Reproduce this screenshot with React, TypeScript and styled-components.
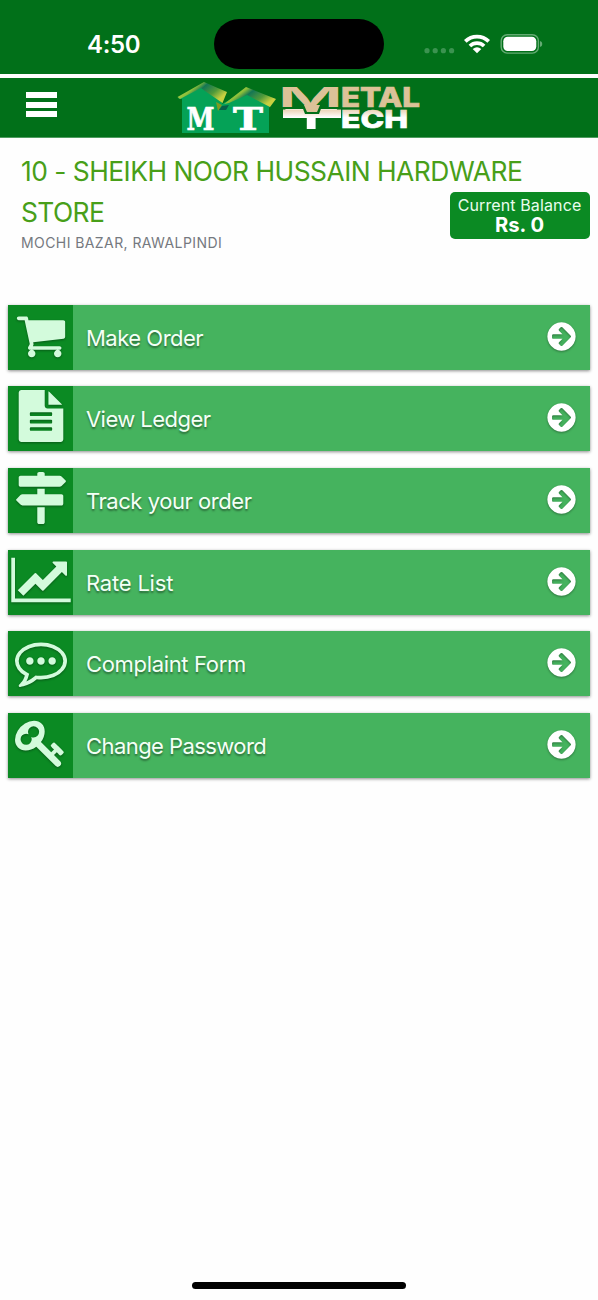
import React from "react";
import styled, { createGlobalStyle } from "styled-components";

const Global = createGlobalStyle`
  * { box-sizing: border-box; }
  body { margin: 0; background: #fff; font-family: Inter, "Liberation Sans", sans-serif; }
`;

const Screen = styled.div`
  width: 598px;
  height: 1300px;
  display: flex;
  flex-direction: column;
  background: #fefefe;
  overflow: hidden;
`;

const StatusBar = styled.div`
  height: 73.5px;
  flex: none;
  display: grid;
  grid-template-columns: 214px 170px 1fr;
  padding-top: 19px;
  background: #017019;
`;

const Clock = styled.div`
  padding-left: 87px;
  font-size: 24px;
  line-height: 51px;
  font-weight: 600;
  letter-spacing: -0.3px;
  color: #fff;
`;

const Island = styled.div`
  height: 50px;
  border-radius: 25px;
  background: #000;
`;

const StatusIcons = styled.div`
  height: 50px;
  padding-left: 39px;
`;

const Header = styled.header`
  height: 59.5px;
  flex: none;
  margin-top: 4.5px;
  display: flex;
  background: #017019;
  border-bottom: 1px solid #4f9c60;
`;

const MenuButton = styled.button`
  width: 31px;
  height: 25px;
  margin: 14px 0 0 26.4px;
  padding: 0;
  border: 0;
  background: none;
  display: flex;
  flex-direction: column;
  justify-content: space-between;
`;

const MenuLine = styled.span`
  height: 6px;
  background: #fff;
`;

const Logo = styled.svg`
  margin-left: 112.6px;
`;

const Account = styled.section`
  height: 167.4px;
  flex: none;
  display: flex;
  flex-direction: column;
  padding: 13.5px 8.5px 0 21px;
`;

const StoreName = styled.h1<{ $tracking: number }>`
  margin: 0;
  font-size: 26.4px;
  line-height: 41px;
  font-weight: 400;
  letter-spacing: ${(p) => p.$tracking}px;
  white-space: nowrap;
  color: #489f19;
`;

const SecondLine = styled.div`
  display: flex;
  justify-content: space-between;
  align-items: flex-start;
  height: 60px;
`;

const Address = styled.div`
  font-size: 14px;
  line-height: 20px;
  letter-spacing: 0.42px;
  color: #75797f;
`;

const Balance = styled.div`
  width: 140px;
  height: 47px;
  border-radius: 5px;
  background: #0b8a23;
  color: #fff;
  text-align: center;
  padding-top: 3px;
  margin-top: -0.5px;
`;

const BalanceLabel = styled.div`
  font-size: 16px;
  line-height: 20px;
  letter-spacing: 0.12px;
  white-space: nowrap;
  color: #e9fdee;
`;

const BalanceValue = styled.div`
  font-size: 20.2px;
  line-height: 19px;
  font-weight: 700;
`;

const Menu = styled.nav`
  display: flex;
  flex-direction: column;
  gap: 16.6px;
  padding: 0 8.4px;
`;

const Row = styled.a`
  height: 65px;
  display: flex;
  align-items: center;
  background: #45b35e;
  box-shadow: 0 1px 3px rgba(0, 0, 0, 0.45);
`;

const IconCell = styled.span`
  width: 65px;
  height: 65px;
  padding: 4px 0 0 6.6px;
  background: #0b8a23;
`;

const Glyph = styled.svg`
  display: block;
  overflow: visible;
  filter: drop-shadow(0 1.5px 1px rgba(0, 0, 0, 0.35));
`;

const Label = styled.span<{ $spacing: number }>`
  flex: 1;
  padding: 1px 0 0 12.6px;
  font-size: 22px;
  letter-spacing: ${(p) => p.$spacing}px;
  color: #f4fff6;
  text-shadow: 0 2px 2px rgba(0, 0, 0, 0.4);
`;

const ArrowCell = styled.span`
  margin: -2px 11.2px 0 0;
`;

const HomeIndicator = styled.div`
  width: 214px;
  height: 7px;
  border-radius: 4px;
  background: #000;
  margin: auto auto 11px 192px;
`;

const icons = {
  cart: "M704 1536q0 52-38 90t-90 38-90-38-38-90 38-90 90-38 90 38 38 90zm896 0q0 52-38 90t-90 38-90-38-38-90 38-90 90-38 90 38 38 90zm128-1088v512q0 24-16.5 42.5t-40.5 21.5l-1044 122q13 60 13 70 0 16-24 64h920q26 0 45 19t19 45-19 45-45 19h-1024q-26 0-45-19t-19-45q0-11 8-31.5t16-36 21.5-40 15.5-29.5l-177-823h-204q-26 0-45-19t-19-45 19-45 45-19h256q16 0 28.5 6.5t19.5 15.5 13 24.5 8 26 5.5 29.5 4.5 26h1201q26 0 45 19t19 45z",
  file: "M1596 476q14 14 28 36h-472v-472q22 14 36 28zm-476 164h544v1056q0 40-28 68t-68 28h-1344q-40 0-68-28t-28-68v-1600q0-40 28-68t68-28h800v544q0 40 28 68t68 28zm160 736v-64q0-14-9-23t-23-9h-704q-14 0-23 9t-9 23v64q0 14 9 23t23 9h704q14 0 23-9t9-23zm0-256v-64q0-14-9-23t-23-9h-704q-14 0-23 9t-9 23v64q0 14 9 23t23 9h704q14 0 23-9t9-23zm0-256v-64q0-14-9-23t-23-9h-704q-14 0-23 9t-9 23v64q0 14 9 23t23 9h704q14 0 23-9t9-23z",
  signs: "M1745 297q10 10 10 23t-10 23l-141 141q-28 28-68 28h-1344q-26 0-45-19t-19-45v-256q0-26 19-45t45-19h576v-64q0-26 19-45t45-19h128q26 0 45 19t19 45v64h512q40 0 68 28zm-977 919h256v512q0 26-19 45t-45 19h-128q-26 0-45-19t-19-45v-512zm832-448q26 0 45 19t19 45v256q0 26-19 45t-45 19h-1344q-40 0-68-28l-141-141q-10-10-10-23t10-23l141-141q28-28 68-28h512v-192h256v192h576z",
  chart: "M1920 1536v128h-2048v-1536h128v1408h1920zm-128-1248v435q0 21-19.5 29.5t-35.5-7.5l-121-121-633 633q-10 10-23 10t-23-10l-233-233-416 416-192-192 585-585q10-10 23-10t23 10l233 233 464-464-121-121q-16-16-7.5-35.5t29.5-19.5h435q14 0 23 9t9 23z",
  comment: "M640 896q0 53-37.5 90.5t-90.5 37.5-90.5-37.5-37.5-90.5 37.5-90.5 90.5-37.5 90.5 37.5 37.5 90.5zm384 0q0 53-37.5 90.5t-90.5 37.5-90.5-37.5-37.5-90.5 37.5-90.5 90.5-37.5 90.5 37.5 37.5 90.5zm384 0q0 53-37.5 90.5t-90.5 37.5-90.5-37.5-37.5-90.5 37.5-90.5 90.5-37.5 90.5 37.5 37.5 90.5zm-512-512q-204 0-381.5 69.5t-282 187.5-104.5 255q0 112 71.5 213.5t201.5 175.5l87 50-27 96q-24 91-70 172 152-63 275-171l43-38 57 6q69 8 130 8 204 0 381.5-69.5t282-187.5 104.5-255-104.5-255-282-187.5-381.5-69.5zm896 512q0 174-120 321.5t-326 233-450 85.5q-70 0-145-8-198 175-460 242-49 14-114 22h-5q-15 0-27-10.5t-16-27.5v-1q-3-4-.5-12t2-10 4.5-9.5l6-9 7-8.5 8-9q7-8 31-34.5t34.5-38 31-39.5 32.5-51 27-59 26-76q-157-89-247.5-220t-90.5-281q0-174 120-321.5t326-233 450-85.5 450 85.5 326 233 120 321.5z",
  key: "M832 512q0-80-56-136t-136-56-136 56-56 136q0 42 19 83-41-19-83-19-80 0-136 56t-56 136 56 136 136 56 136-56 56-136q0-42-19-83 41 19 83 19 80 0 136-56t56-136zm851 704q0 17-49 66t-66 49q-9 0-28.5-16t-36.5-33-38.5-40-24.5-26l-96 96 220 220q28 28 28 68 0 42-39 81t-81 39q-40 0-68-28l-671-671q-176 131-365 131-163 0-265.5-102.5t-102.5-265.5q0-160 95-313t248-248 313-95q163 0 265.5 102.5t102.5 265.5q0 189-131 365l355 355 96-96q-3-3-26-24.5t-40-38.5-33-36.5-16-28.5q0-17 49-66t66-49q13 0 23 10 6 6 46 44.5t82 79.5 86.5 86 73 78 28.5 41z",
  arrow: "M1413 896q0-27-18-45l-91-91-362-362q-18-18-45-18t-45 18l-91 91q-18 18-18 45t18 45l189 189h-502q-26 0-45 19t-19 45v128q0 26 19 45t45 19h502l-189 189q-19 19-19 45t19 45l91 91q18 18 45 18t45-18l362-362 91-91q18-18 18-45zm251 0q0 209-103 385.5t-279.5 279.5-385.5 103-385.5-103-279.5-279.5-103-385.5 103-385.5 279.5-279.5 385.5-103 385.5 103 279.5 279.5 103 385.5z",
};

const items: { label: string; icon: keyof typeof icons; spacing: number }[] = [
  { label: "Make Order", icon: "cart", spacing: -0.5 },
  { label: "View Ledger", icon: "file", spacing: -0.55 },
  { label: "Track your order", icon: "signs", spacing: -0.45 },
  { label: "Rate List", icon: "chart", spacing: -0.2 },
  { label: "Complaint Form", icon: "comment", spacing: -0.33 },
  { label: "Change Password", icon: "key", spacing: -0.57 },
];

function Icon({ name, size, color }: { name: keyof typeof icons; size: number; color: string }) {
  return (
    <Glyph width={size} height={size} viewBox="0 0 1792 1792">
      <path d={icons[name]} fill={color} />
    </Glyph>
  );
}

function BrandLogo() {
  return (
    <Logo width="252" height="59" viewBox="170 78 252 59">
      <defs>
        <linearGradient id="roof" x1="0" y1="0" x2="1" y2="0.5">
          <stop offset="0" stopColor="#dfe65a" />
          <stop offset="0.38" stopColor="#8cbf3a" />
          <stop offset="0.52" stopColor="#147654" />
          <stop offset="0.78" stopColor="#4f9a3a" />
          <stop offset="1" stopColor="#c8d040" />
        </linearGradient>
        <linearGradient id="cream" gradientUnits="userSpaceOnUse" x1="0" y1="108" x2="0" y2="120">
          <stop offset="0" stopColor="#e6caa6" />
          <stop offset="0.8" stopColor="#fff" />
        </linearGradient>
      </defs>
      <path d="M178 99L203 83L225 94L222 104L247 90L275 99L269 108V133H182V99Z" fill="#05a257" />
      <path d="M177.5 97L204 82L227 92L222.5 103L205 91L201 88L180 99Z" fill="url(#roof)" />
      <path d="M224 104L246 87L276 99L270 107L247 95L229 103Z" fill="url(#roof)" />
      <path d="M216 102L222 105L218 111Z" fill="#7e9a20" />
      <path d="M222 106L229 105L226 110H219Z" fill="#075f48" />
      <g fontFamily="DejaVu Serif, serif" fontWeight="700" fill="#fff" stroke="#fff" strokeWidth="0.7">
        <text x="186.500" y="129.5" fontSize="32.500" textLength="28" lengthAdjust="spacingAndGlyphs">M</text>
        <text x="233" y="129.5" fontSize="32.500" textLength="30" lengthAdjust="spacingAndGlyphs">T</text>
      </g>
      <g fontFamily="Inter, sans-serif">
        <text transform="translate(281 129) scale(3.4 1)" fontSize="27.5" fontWeight="400" fill="#fff">T</text>
        <rect x="283" y="109.5" width="58" height="8.5" fill="url(#cream)" />
        <path d="M302 106H322L319 114H305Z" fill="#017019" />
        <text transform="translate(277.500 106.5) scale(2.64 1)" fontSize="27" fontWeight="600" fill="#dcc298">M</text>
        <path d="M304 105H320L317 112H307Z" fill="#dcc298" />
        <g fontWeight="800">
          <text x="341" y="106.5" fontSize="27" fill="#dcc298" stroke="#dcc298" strokeWidth="0.7" textLength="79" lengthAdjust="spacingAndGlyphs">ETAL</text>
          <text x="341" y="128.3" fontSize="24.500" fill="url(#cream)" stroke="url(#cream)" strokeWidth="0.7" textLength="67" lengthAdjust="spacingAndGlyphs">ECH</text>
        </g>
      </g>
    </Logo>
  );
}

export default function App() {
  return (
    <Screen>
      <Global />
      <StatusBar>
        <Clock>4:50</Clock>
        <Island />
        <StatusIcons>
          <svg width="122" height="50" viewBox="423 19 122 50">
            <g fill="#3b9350">
              <circle cx="427" cy="50.7" r="2.6" />
              <circle cx="435.2" cy="50.7" r="2.6" />
              <circle cx="443.4" cy="50.7" r="2.6" />
              <circle cx="451.6" cy="50.7" r="2.6" />
            </g>
            <g fill="none" stroke="#fff" strokeWidth="3.7">
              <path d="M465.3 41.4A16.8 16.8 0 0 1 488.7 41.4" />
              <path d="M469.9 46A10.2 10.2 0 0 1 484.1 46" />
            </g>
            <path d="M472.7 49Q477 45.6 481.3 49L477 53.3Z" fill="#fff" />
            <rect x="501.2" y="34.7" width="37.2" height="18.4" rx="6" fill="none" stroke="#64ab73" strokeWidth="1.4" />
            <rect x="503.3" y="36.8" width="33" height="14.2" rx="4.4" fill="#fff" />
            <path d="M540 41V47Q542.3 46.3 542.3 44Q542.3 41.7 540 41Z" fill="#64ab73" />
          </svg>
        </StatusIcons>
      </StatusBar>
      <Header>
        <MenuButton aria-label="Menu">
          <MenuLine />
          <MenuLine />
          <MenuLine />
        </MenuButton>
        <BrandLogo />
      </Header>
      <Account>
        <StoreName $tracking={-0.52}>10 - SHEIKH NOOR HUSSAIN HARDWARE</StoreName>
        <SecondLine>
          <div>
            <StoreName as="div" $tracking={-0.6}>STORE</StoreName>
            <Address>MOCHI BAZAR, RAWALPINDI</Address>
          </div>
          <Balance>
            <BalanceLabel>Current Balance</BalanceLabel>
            <BalanceValue>Rs. 0</BalanceValue>
          </Balance>
        </SecondLine>
      </Account>
      <Menu>
        {items.map((item) => (
          <Row key={item.label}>
            <IconCell>
              <Icon name={item.icon} size={52} color="#d3fbdc" />
            </IconCell>
            <Label $spacing={item.spacing}>{item.label}</Label>
            <ArrowCell>
              <Icon name="arrow" size={33} color="#fff" />
            </ArrowCell>
          </Row>
        ))}
      </Menu>
      <HomeIndicator />
    </Screen>
  );
}
